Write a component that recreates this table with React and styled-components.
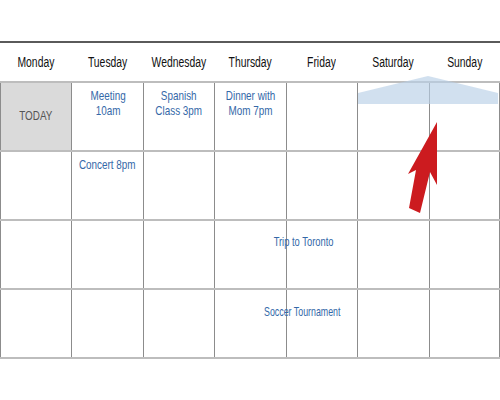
import React from "react";
import styled, { createGlobalStyle } from "styled-components";

const COLORS = {
  rule: "#5a5a5a",
  rowLine: "#bdbdbd",
  colLine: "#8c8c8c",
  today: "#dadada",
  event: "#3468a8",
};

const GlobalStyle = createGlobalStyle`
  html, body {
    margin: 0;
    padding: 0;
    background: #ffffff;
  }
  * {
    box-sizing: border-box;
  }
`;

const Page = styled.div`
  position: relative;
  width: 500px;
  height: 400px;
  padding-top: 41px;
  font-family: "Liberation Sans", Arial, sans-serif;
`;

const Calendar = styled.div`
  width: 500px;
  border-top: 2px solid ${COLORS.rule};
`;

const HeaderRow = styled.div`
  display: grid;
  grid-template-columns: repeat(7, minmax(0, 1fr));
  height: 40px;
  border-bottom: 2px solid ${COLORS.rowLine};
`;

const DayName = styled.div`
  display: flex;
  align-items: center;
  justify-content: center;
  font-size: 14px;
  color: #111;

  > span {
    display: inline-block;
    transform: scaleX(0.74);
    white-space: nowrap;
  }
`;

const Week = styled.div`
  display: grid;
  grid-template-columns: repeat(7, minmax(0, 1fr));
  height: 69px;
  border-bottom: 2px solid ${COLORS.rowLine};
`;

const Cell = styled.div`
  display: flex;
  flex-direction: column;
  align-items: center;
  justify-content: ${(p) => (p.$today ? "center" : "flex-start")};
  min-width: 0;
  border-left: 1px solid ${COLORS.colLine};
  background: ${(p) => (p.$today ? COLORS.today : "transparent")};
  padding-top: ${(p) => (p.$today ? 0 : p.$pad || 5)}px;
  overflow: visible;

  &:last-child {
    border-right: 1px solid ${COLORS.colLine};
  }
`;

const TodayLabel = styled.span`
  font-size: 13px;
  color: #555;
  display: inline-block;
  transform: scaleX(0.76);
  margin-top: -2px;
`;

const Event = styled.div`
  font-size: 13px;
  line-height: 15px;
  color: ${COLORS.event};
  text-align: center;
  white-space: nowrap;
  transform: translateX(${(p) => p.$shift || 0}px) scaleX(${(p) => p.$scale || 0.76});
  position: relative;
  z-index: 1;
`;

const Overlay = styled.svg`
  position: absolute;
  top: 0;
  left: 0;
  pointer-events: none;
`;

const days = ["Monday", "Tuesday", "Wednesday", "Thursday", "Friday", "Saturday", "Sunday"];

const weeks = [
  { 0: { today: true }, 1: { lines: ["Meeting", "10am"] }, 2: { lines: ["Spanish", "Class 3pm"] }, 3: { lines: ["Dinner with", "Mom 7pm"] } },
  { 1: { lines: ["Concert 8pm"] } },
  { 4: { lines: ["Trip to Toronto"], shift: -18, pad: 13, scale: 0.72 } },
  { 4: { lines: ["Soccer Tournament"], shift: -20, pad: 14, scale: 0.68 } },
];

const App = () => {
  return (
    <Page>
      <GlobalStyle />
      <Calendar>
        <HeaderRow>
          {days.map((d) => (
            <DayName key={d}>
              <span>{d}</span>
            </DayName>
          ))}
        </HeaderRow>
        {weeks.map((week, w) => (
          <Week key={w}>
            {days.map((d, i) => {
              const cell = week[i];
              if (cell && cell.today) {
                return (
                  <Cell key={d} $today>
                    <TodayLabel>TODAY</TodayLabel>
                  </Cell>
                );
              }
              return (
                <Cell key={d} $pad={cell && cell.pad}>
                  {cell && (
                    <Event $shift={cell.shift} $scale={cell.scale}>
                      {cell.lines.map((l, k) => (
                        <div key={k}>{l}</div>
                      ))}
                    </Event>
                  )}
                </Cell>
              );
            })}
          </Week>
        ))}
      </Calendar>
      <Overlay width="500" height="400" viewBox="0 0 500 400">
        <polygon
          points="358,104 358,93 428,76 498,93 498,104"
          fill="#b9cfe6"
          fillOpacity="0.65"
        />
        <polygon
          points="437,122 437,185 430,172 420,213 409,208 416,170 408,174"
          fill="#cc1b1f"
        />
      </Overlay>
    </Page>
  );
};

export default App;
